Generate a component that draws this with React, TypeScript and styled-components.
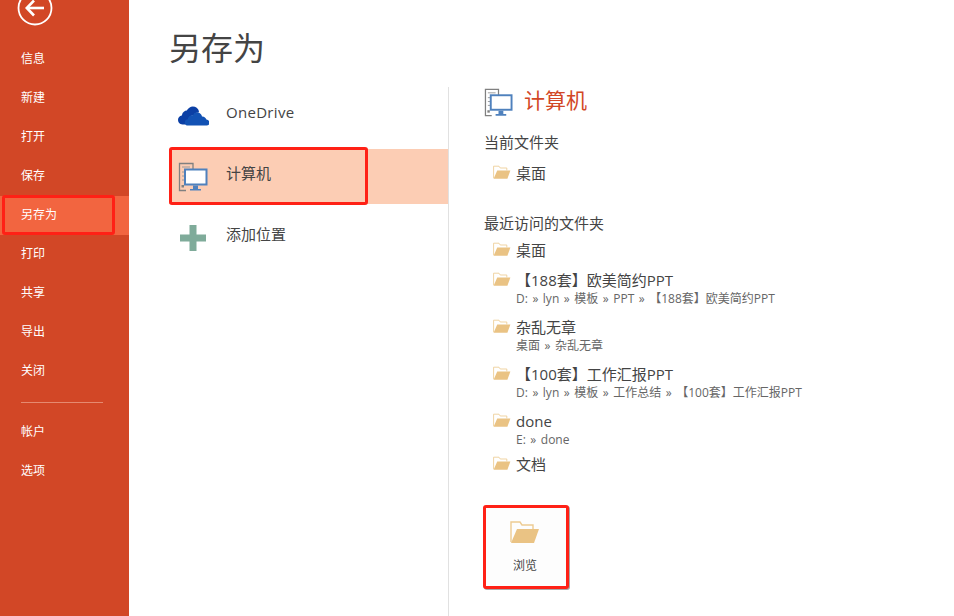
import React from 'react';
import styled, { createGlobalStyle } from 'styled-components';

const Global = createGlobalStyle`
  html, body { margin: 0; padding: 0; background: #fff; overflow: hidden; }
  body { font-family: "Open Sans", "Noto Sans CJK SC", sans-serif; }
`;
const Page = styled.div`
  display: flex; width: 954px; height: 616px; overflow: hidden; background: #fff;
`;
const Sidebar = styled.nav`
  width: 129px; flex: none; background: #d24726; color: #fff; display: flex; flex-direction: column; overflow: hidden;
`;
const BackButton = styled.div`
  width: 36px; height: 36px; margin: -10px 0 0 17px; flex: none; display: flex;
`;
const NavList = styled.div`
  display: flex; flex-direction: column; margin-top: 14px;
`;
const NavItem = styled.div<{ $active?: boolean }>`
  position: relative; height: 39px; box-sizing: border-box; display: flex; align-items: center; padding: 0 0 4px 21px;
  font-size: 12px; background: ${p => (p.$active ? '#f26540' : 'transparent')};
`;
const NavMark = styled.span`
  position: absolute; left: 2px; top: -1px; width: 113px; height: 40px; box-sizing: border-box;
  border: 3px solid #ff2116; border-radius: 3px;
`;
const NavDivider = styled.div`
  height: 1px; width: 82px; margin: 11px 0 10px 21px; background: #e58a70;
`;
const Main = styled.main`
  flex: 1; display: flex; flex-direction: column; padding-left: 40px; min-width: 0;
`;
const Title = styled.h1`
  margin: 26px 0 0; height: 44px; line-height: 44px; font-size: 32px; font-weight: 400; color: #444;
`;
const Columns = styled.div`
  display: flex; flex: 1; margin-top: 17px; min-height: 0;
`;
const Places = styled.div`
  width: 279px; flex: none; display: flex; flex-direction: column; border-right: 1px solid #e1e1e1; padding-top: 1px;
`;
const Place = styled.div<{ $active?: boolean }>`
  position: relative; height: 55px; margin-bottom: 6px; display: flex; align-items: center; font-size: 15px; color: #444;
  background: ${p => (p.$active ? '#fccdb4' : 'transparent')};
`;
const PlaceIcon = styled.div`
  width: 57px; flex: none; display: flex; justify-content: center; padding-right: 9px; box-sizing: border-box;
`;
const PlaceLabel = styled.span<{ $wide?: boolean }>`
  padding-bottom: 8px; letter-spacing: ${p => (p.$wide ? '0.3px' : '0')};
`;
const PlaceMark = styled.span`
  position: absolute; left: 0; top: -2px; width: 199px; height: 58px; box-sizing: border-box;
  border: 3px solid #ff2116; border-radius: 3px;
`;
const Detail = styled.section`
  flex: 1; padding-left: 35px; display: flex; flex-direction: column;
`;
const DetailHead = styled.div`
  display: flex; align-items: center; gap: 11px; height: 30px;
  font-size: 21px; color: #d24726;
`;
const HeadText = styled.span`
  padding-bottom: 6px;
`;
const SectionLabel = styled.div`
  height: 20px; line-height: 20px; margin-top: 15px; font-size: 15px; color: #444;
`;
const RecentLabel = styled(SectionLabel)`
  margin-top: 30px;
`;
const FolderList = styled.div`
  display: flex; flex-direction: column; padding-left: 9px; margin-top: 11px;
`;
const RecentList = styled(FolderList)`
  margin-top: 7px;
`;
const FolderRow = styled.div<{ $h: number }>`
  display: flex; height: ${p => p.$h}px;
`;
const FolderGlyph = styled.div`
  width: 23px; height: 18px; flex: none; display: flex; align-items: center;
`;
const FolderText = styled.div`
  display: flex; flex-direction: column;
`;
const FolderName = styled.div`
  height: 20px; line-height: 20px; font-size: 15px; color: #444; white-space: nowrap;
`;
const FolderPath = styled.div`
  height: 14px; line-height: 14px; margin-top: 2px; font-size: 12px; color: #666; white-space: pre; word-spacing: 1.4px;
`;
const Browse = styled.div`
  width: 86px; height: 84px; margin: 31px 0 0 -1px; box-sizing: border-box; border: 3px solid #ff2116; border-radius: 3px;
  background: #fdfdfd; box-shadow: 1px 1px 0 #aaa;
  display: flex; flex-direction: column; align-items: center; padding: 12px 2px 0 0;
`;
const BrowseLabel = styled.div`
  font-size: 12px; line-height: 16px; color: #444; margin-top: 14px;
`;

const Folder = ({ size = 18 }: { size?: number }) => (
  <svg width={size} height={size * 0.8} viewBox="0 0 30 24" fill="none">
    <path d="M1 22V2h9l2 3h11v4" stroke="#edcb92" strokeWidth="1.4" />
    <path d="M7 9h22l-5 14H1z" fill="#eac384" />
  </svg>
);
const Computer = ({ size = 30 }: { size?: number }) => (
  <svg width={size} height={size} viewBox="0 0 30 30" fill="none">
    <path d="M15 8V1.5H1.5v27H8" stroke="#808080" strokeWidth="1.3" />
    <path d="M4 5h8M4 10h3M4 14h3M4 18h3" stroke="#9a9a9a" />
    <rect x="3.5" y="23" width="2.5" height="2.5" fill="#808080" />
    <rect x="7" y="7.5" width="21.5" height="15" fill="#fff" stroke="#4f81bd" strokeWidth="2" />
    <path d="M15 23.5h5V27h-5zM12 27h11v1.6H12z" fill="#4f81bd" />
  </svg>
);
const Cloud = () => (
  <svg width="31" height="20" viewBox="0 0 31 20">
    <path d="M4.5 18.5C1.5 18.5 0 16 0 13.8c0-2.4 1.6-4 3.8-4.4C4.6 6 6.8 4.6 8.8 4.6 10 2 12.4.4 14.8.4c3 0 5.4 2 6.2 4.8l-.4 1.4c-2-.4-4 .6-5 2.8-2.6-.2-5 1.6-5.2 4.4-1.8.6-2.8 2.4-2.4 4.8z" fill="#0b3fa5" />
    <path d="M10 19.6c-2 0-3.2-1.6-3.2-3.2 0-1.8 1.2-3 3-3.2.2-2.6 2.4-4.4 5.2-4 1-2.2 3-3.2 5-2.8 2.2.4 3.6 2 4 4 2-.2 4 1.4 4.4 3.2 1.8.2 3.2 1.6 3.2 3.2 0 1.6-1.2 2.8-3 2.8z" fill="#1252b4" />
  </svg>
);
const Plus = () => (
  <svg width="26" height="26" viewBox="0 0 26 26"><path d="M9.5 0h7v9.5H26v7h-9.5V26h-7v-9.5H0v-7h9.5z" fill="#7fab9a" /></svg>
);
const Back = () => (
  <svg width="36" height="36" viewBox="0 0 36 36" fill="none" stroke="#fff">
    <circle cx="18" cy="18" r="16.5" strokeWidth="1.8" />
    <path d="M10 18h17" strokeWidth="2.6" />
    <path d="M17 10.5 9.8 18l7.2 7.5" strokeWidth="2.6" />
  </svg>
);

const nav = ['信息', '新建', '打开', '保存', '另存为', '打印', '共享', '导出', '关闭'];

const recent = [
  { name: '桌面', h: 30 },
  { name: '【188套】欧美简约PPT', path: 'D: » lyn » 模板 » PPT » 【188套】欧美简约PPT', h: 47 },
  { name: '杂乱无章', path: '桌面 » 杂乱无章', h: 47 },
  { name: '【100套】工作汇报PPT', path: 'D: » lyn » 模板 » 工作总结 » 【100套】工作汇报PPT', h: 47 },
  { name: 'done', path: 'E: » done', h: 43 },
  { name: '文档', h: 20 },
];

export default function App() {
  return (
    <Page>
      <Global />
      <Sidebar>
        <BackButton><Back /></BackButton>
        <NavList>
          {nav.map(n => (
            <NavItem key={n} $active={n === '另存为'}>
              {n}
              {n === '另存为' && <NavMark />}
            </NavItem>
          ))}
          <NavDivider />
          <NavItem>帐户</NavItem>
          <NavItem>选项</NavItem>
        </NavList>
      </Sidebar>
      <Main>
        <Title>另存为</Title>
        <Columns>
          <Places>
            <Place>
              <PlaceIcon><Cloud /></PlaceIcon>
              <PlaceLabel $wide>OneDrive</PlaceLabel>
            </Place>
            <Place $active>
              <PlaceIcon><Computer /></PlaceIcon>
              <PlaceLabel>计算机</PlaceLabel>
              <PlaceMark />
            </Place>
            <Place>
              <PlaceIcon><Plus /></PlaceIcon>
              <PlaceLabel>添加位置</PlaceLabel>
            </Place>
          </Places>
          <Detail>
            <DetailHead><Computer size={29} /><HeadText>计算机</HeadText></DetailHead>
            <SectionLabel>当前文件夹</SectionLabel>
            <FolderList>
              <FolderRow $h={20}>
                <FolderGlyph><Folder /></FolderGlyph>
                <FolderText><FolderName>桌面</FolderName></FolderText>
              </FolderRow>
            </FolderList>
            <RecentLabel>最近访问的文件夹</RecentLabel>
            <RecentList>
              {recent.map(r => (
                <FolderRow key={r.name} $h={r.h}>
                  <FolderGlyph><Folder /></FolderGlyph>
                  <FolderText>
                    <FolderName>{r.name}</FolderName>
                    {r.path && <FolderPath>{r.path}</FolderPath>}
                  </FolderText>
                </FolderRow>
              ))}
            </RecentList>
            <Browse>
              <Folder size={30} />
              <BrowseLabel>浏览</BrowseLabel>
            </Browse>
          </Detail>
        </Columns>
      </Main>
    </Page>
  );
}
